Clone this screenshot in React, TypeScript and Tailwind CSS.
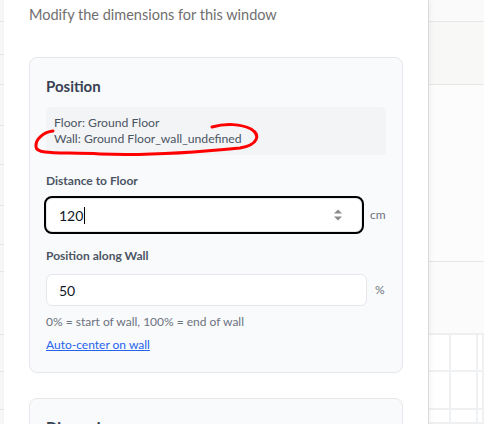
import React from "react";

const font = { fontFamily: "Lato, 'Noto Sans', sans-serif" };

function LeftStrip() {
  const rows = [22, 33, 30, 41, 39, 41, 39, 27, 63, 37, 38];
  return (
    <div className="flex w-[4px] shrink-0 flex-col bg-[#f7f7f7]">
      {rows.map((h, i) => (
        <div key={i} className="border-b border-[#e6e6e6]" style={{ height: h }} />
      ))}
    </div>
  );
}

function RightStrip() {
  return (
    <div className="flex flex-1 flex-col border-l border-[#e2e2e2] bg-[#fbfbfb]">
      <div className="h-[22px] border-b border-[#e6e6e6] bg-[#fafafa]" />
      <div className="h-[63px] border-b border-[#e6e6e6] bg-[#f8f8f7]" />
      <div className="h-[177px] border-b border-[#e6e6e6] bg-[#fcfcfc]" />
      <div className="h-[73px] border-b-2 border-[#eeeff1] bg-[#fbfbfb]" />
      <div className="grid flex-1 grid-cols-[22px_27px_1fr] grid-rows-[37px_38px_1fr] bg-white">
        {Array.from({ length: 9 }).map((_, i) => (
          <div key={i} className="border-r-2 border-b-2 border-[#eff0f2]" />
        ))}
      </div>
    </div>
  );
}

function Spinner() {
  return (
    <svg width="12" height="14" viewBox="0 0 12 14" className="shrink-0">
      <path d="M2 5.5 L6 1.5 L10 5.5 Z" fill="#8a8a8a" />
      <path d="M2 8.5 L6 12.5 L10 8.5 Z" fill="#8a8a8a" />
    </svg>
  );
}

function Scribble() {
  return (
    <svg
      className="pointer-events-none absolute left-0 top-0 z-20"
      width="484"
      height="424"
      viewBox="0 0 484 424"
    >
      <path
        d="M53 131 C 44 132, 35 139, 36 147 C 37 155, 60 152, 100 154 C 150 156, 200 152, 240 148 C 258 145, 261 135, 251 129 C 241 124, 226 123, 212 127"
        fill="none"
        stroke="#ff0000"
        strokeWidth="3"
        strokeLinecap="round"
      />
    </svg>
  );
}

export default function App() {
  return (
    <div className="relative flex h-[424px] w-[484px] overflow-hidden bg-white" style={font}>
      <LeftStrip />
      <div className="relative z-10 w-[424px] shrink-0 bg-white px-[25px] pt-[5px] shadow-[2px_0_6px_rgba(0,0,0,0.06)]">
        <p className="text-[14.5px] leading-5 text-[#6f6f6f]">Modify the dimensions for this window</p>

        <div className="mt-[32px] flex flex-col gap-[25px]">
          <section className="rounded-lg border border-[#e5e7eb] bg-[#f9fafb] px-4 pb-[19px] pt-4">
            <h3 className="mb-[9px] text-[15px] font-bold leading-6 text-[#374151]">Position</h3>
            <div className="rounded bg-[#f3f4f6] px-2 py-2 text-[12.2px] leading-4 text-[#4b5563]">
              <div>Floor: Ground Floor</div>
              <div>Wall: Ground Floor_wall_undefined</div>
            </div>

            <div className="mt-[18px]">
              <label className="mb-[9px] block text-[12px] font-bold leading-4 text-[#4b5563]">
                Distance to Floor
              </label>
              <div className="flex items-center gap-2">
                <div className="flex h-[34px] flex-1 items-center rounded-md border border-[#e5e7eb] bg-white pl-3 pr-[17px] text-[14px] text-[#111827] outline-2 outline-black">
                  <span>120</span>
                  <span className="ml-px h-[17px] w-px bg-black" />
                  <span className="flex-1" />
                  <Spinner />
                </div>
                <span className="w-[16px] text-[12px] text-[#6b7280]">cm</span>
              </div>
            </div>

            <div className="mt-[16px]">
              <label className="mb-[10px] block text-[12px] font-bold leading-4 text-[#4b5563]">
                Position along Wall
              </label>
              <div className="flex items-center gap-2">
                <div className="flex h-[32px] flex-1 items-center rounded-md border border-[#e5e7eb] bg-white pl-3 text-[14px] text-[#111827]">
                  50
                </div>
                <span className="w-[11px] text-[12px] text-[#6b7280]">%</span>
              </div>
              <p className="mt-2 text-[12px] leading-4 text-[#6b7280]">
                0% = start of wall, 100% = end of wall
              </p>
              <a href="#" className="mt-[7px] block text-[12px] leading-4 text-[#2563eb] underline">
                Auto-center on wall
              </a>
            </div>
          </section>

          <section className="rounded-lg border border-[#e5e7eb] bg-[#f9fafb] px-4 pt-4">
            <h3 className="text-[15px] font-bold leading-6 text-[#374151]">Dimensions</h3>
            <div className="h-[200px]" />
          </section>
        </div>
      </div>
      <RightStrip />
      <Scribble />
    </div>
  );
}
